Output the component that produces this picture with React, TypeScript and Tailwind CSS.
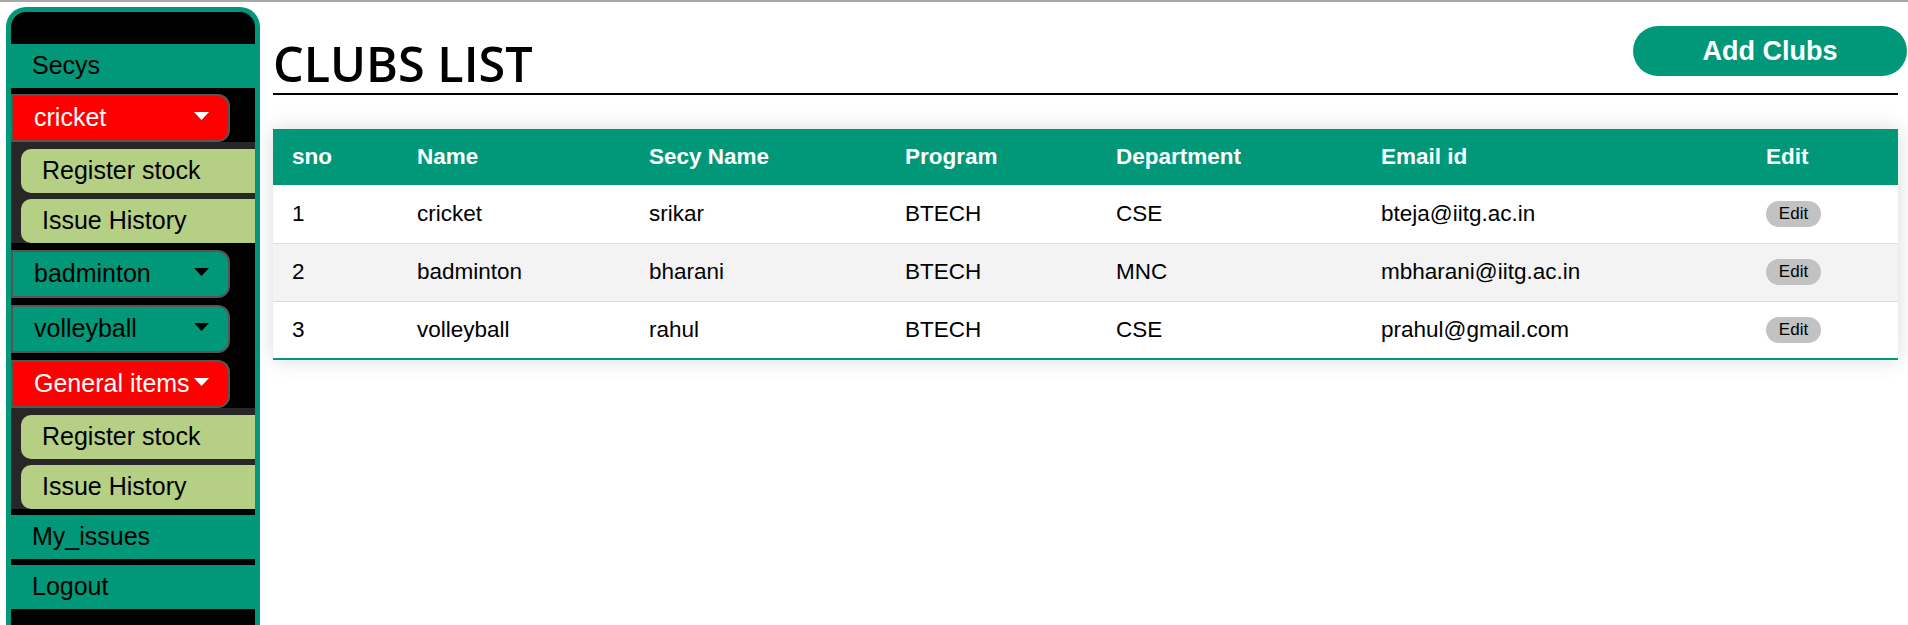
import React from "react";

interface Club {
  sno: number;
  name: string;
  secy: string;
  program: string;
  dept: string;
  email: string;
}

const clubs: Club[] = [
  { sno: 1, name: "cricket", secy: "srikar", program: "BTECH", dept: "CSE", email: "bteja@iitg.ac.in" },
  { sno: 2, name: "badminton", secy: "bharani", program: "BTECH", dept: "MNC", email: "mbharani@iitg.ac.in" },
  { sno: 3, name: "volleyball", secy: "rahul", program: "BTECH", dept: "CSE", email: "prahul@gmail.com" },
];

function Caret({ white }: { white?: boolean }) {
  return (
    <svg width="15" height="8" viewBox="0 0 15 8" className="-mt-[4px] shrink-0">
      <path d="M0 0H15L7.5 8Z" fill={white ? "#ffffff" : "#000000"} />
    </svg>
  );
}

function DropButton({ label, open }: { label: string; open?: boolean }) {
  return (
    <button
      className={`flex h-[48px] w-[219px] items-center justify-between rounded-r-[12px] border-2 border-[#555555] pl-[21px] pr-[19px] text-[25px] ${open ? "bg-[#ff0000] text-white" : "bg-[#009879] text-black"}`}
    >
      <span>{label}</span>
      <Caret white={open} />
    </button>
  );
}

function SubMenu() {
  return (
    <div className="flex flex-col gap-[6px] bg-[#272727] pl-[10px] pt-[7px]">
      {["Register stock", "Issue History"].map((item) => (
        <div
          key={item}
          className="flex h-[44px] items-center rounded-l-[10px] bg-[#b5cf85] pl-[21px] text-[25px] text-black"
        >
          {item}
        </div>
      ))}
    </div>
  );
}

function Sidebar() {
  return (
    <aside className="ml-[6px] mt-[5px] h-[640px] w-[254px] shrink-0 overflow-hidden rounded-t-[20px] border-x-[5px] border-t-[5px] border-[#009879] bg-black pt-[32px]">
      <div className="flex h-[44px] items-center bg-[#009879] pl-[21px] text-[25px] text-black">Secys</div>
      <div className="mt-[6px]">
        <DropButton label="cricket" open />
        <SubMenu />
      </div>
      <div className="mt-[7px]">
        <DropButton label="badminton" />
      </div>
      <div className="mt-[7px]">
        <DropButton label="volleyball" />
      </div>
      <div className="mt-[7px]">
        <DropButton label="General items" open />
        <SubMenu />
      </div>
      <div className="mt-[6px] flex h-[44px] items-center bg-[#009879] pl-[21px] text-[25px] text-black">My_issues</div>
      <div className="mt-[6px] flex h-[44px] items-center bg-[#009879] pl-[21px] text-[25px] text-black">Logout</div>
    </aside>
  );
}

const cols = [
  { label: "sno", w: "w-[125px]" },
  { label: "Name", w: "w-[232px]" },
  { label: "Secy Name", w: "w-[256px]" },
  { label: "Program", w: "w-[211px]" },
  { label: "Department", w: "w-[265px]" },
  { label: "Email id", w: "w-[385px]" },
  { label: "Edit", w: "w-[151px]" },
];

function ClubsTable() {
  return (
    <table className="mt-[34px] w-full table-fixed border-collapse text-[22.5px] shadow-[0_0_20px_rgba(0,0,0,0.15)]">
      <thead>
        <tr className="bg-[#009879] text-left text-white">
          {cols.map((c) => (
            <th key={c.label} className={`${c.w} h-[56px] pl-[19px] font-bold`}>
              {c.label}
            </th>
          ))}
        </tr>
      </thead>
      <tbody>
        {clubs.map((club, i) => (
          <tr
            key={club.sno}
            className={`${i % 2 === 1 ? "bg-[#f3f3f3]" : "bg-white"} ${i === clubs.length - 1 ? "border-b-2 border-[#009879]" : "border-b border-[#dddddd]"}`}
          >
            <td className="h-[58px] pl-[19px]">{club.sno}</td>
            <td className="pl-[19px]">{club.name}</td>
            <td className="pl-[19px]">{club.secy}</td>
            <td className="pl-[19px]">{club.program}</td>
            <td className="pl-[19px]">{club.dept}</td>
            <td className="pl-[19px]">{club.email}</td>
            <td className="pl-[19px]">
              <button className="flex h-[26px] w-[55px] items-center justify-center rounded-full bg-[#c2c2c2] text-[17px] text-black">
                Edit
              </button>
            </td>
          </tr>
        ))}
      </tbody>
    </table>
  );
}

export default function App() {
  return (
    <div className="h-[625px] overflow-hidden bg-white font-['Liberation_Sans',Arial,sans-serif]">
      <div className="h-[2px] bg-[#a8a8a8]" />
      <div className="flex">
        <Sidebar />
        <main className="ml-[13px] mr-[10px] flex-1">
          <div className="flex h-[93px] items-start justify-between border-b-2 border-black">
            <h1 className="mt-[37px] font-['Open_Sans',sans-serif] text-[48.5px] font-semibold leading-none text-black">
              CLUBS LIST
            </h1>
            <button className="-mr-[9px] mt-[24px] h-[50px] w-[274px] rounded-full bg-[#009879] text-[27px] font-bold text-white">
              Add Clubs
            </button>
          </div>
          <ClubsTable />
        </main>
      </div>
    </div>
  );
}
